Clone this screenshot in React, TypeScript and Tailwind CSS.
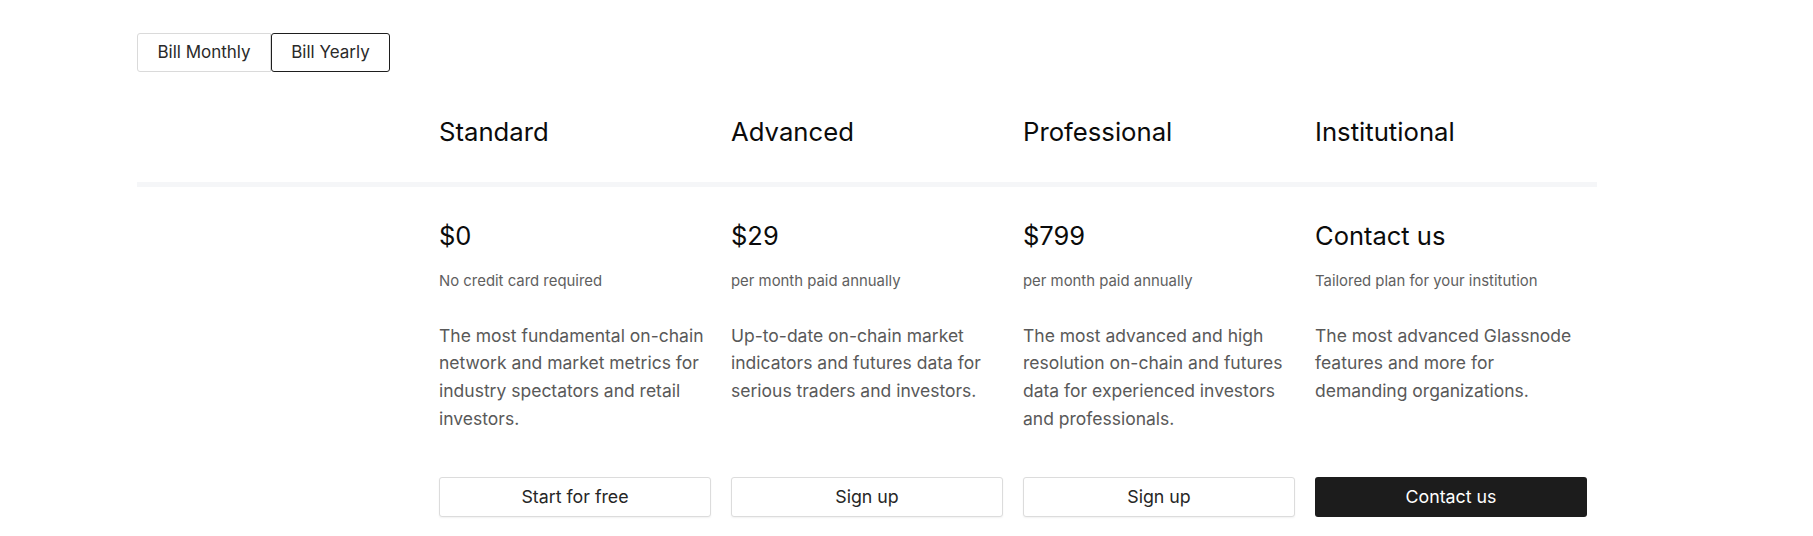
import React from "react";

const plans = [
  {
    name: "Standard",
    price: "$0",
    sub: "No credit card required",
    desc: "The most fundamental on-chain network and market metrics for industry spectators and retail investors.",
    cta: "Start for free",
    dark: false,
  },
  {
    name: "Advanced",
    price: "$29",
    sub: "per month paid annually",
    desc: "Up-to-date on-chain market indicators and futures data for serious traders and investors.",
    cta: "Sign up",
    dark: false,
  },
  {
    name: "Professional",
    price: "$799",
    sub: "per month paid annually",
    desc: "The most advanced and high resolution on-chain and futures data for experienced investors and professionals.",
    cta: "Sign up",
    dark: false,
  },
  {
    name: "Institutional",
    price: "Contact us",
    sub: "Tailored plan for your institution",
    desc: "The most advanced Glassnode features and more for demanding organizations.",
    cta: "Contact us",
    dark: true,
  },
];

export default function App() {
  return (
    <div className="w-[1813px] h-[536px] bg-white overflow-hidden font-['Inter',sans-serif] antialiased">
      <div className="ml-[137px] w-[1460px] pt-[33px]">
        <div className="flex">
          <button className="h-[39px] w-[134px] border border-[#dadada] rounded-l-[3px] text-[17px] text-[#2a2a2a] bg-white">
            Bill Monthly
          </button>
          <button className="h-[39px] w-[119px] border border-[#1e1e1e] rounded-[3px] text-[17px] text-[#2a2a2a] bg-white">
            Bill Yearly
          </button>
        </div>

        <div className="grid grid-cols-5 mt-[44px]">
          <div />
          {plans.map((p) => (
            <div key={p.name} className="px-[10px] text-[25.7px] leading-[32px] text-[#0b0b0b]">
              {p.name}
            </div>
          ))}
        </div>

        <div className="mt-[34px] h-[5px] bg-[#f5f6f8]" />

        <div className="grid grid-cols-5 pt-[34px]">
          <div />
          {plans.map((p) => (
            <div key={p.name} className="px-[10px] flex flex-col">
              <div className="text-[25.5px] leading-[30px] text-[#0b0b0b]">{p.price}</div>
              <div className="mt-[19.5px] text-[14.9px] leading-[20px] text-[#5f5f5f]">{p.sub}</div>
              <div className="mt-[31px] mb-[45px] flex-1 text-[17.5px] leading-[27.7px] text-[#595959]">
                {p.desc}
              </div>
              <button
                className={
                  p.dark
                    ? "h-[40px] w-full rounded-[3px] bg-[#1c1c1c] text-white text-[17.8px]"
                    : "h-[40px] w-full rounded-[3px] border border-[#dcdcdc] bg-white text-[#262626] text-[17.8px] shadow-[0_1px_2px_rgba(0,0,0,0.06)]"
                }
              >
                {p.cta}
              </button>
            </div>
          ))}
        </div>
      </div>
    </div>
  );
}
